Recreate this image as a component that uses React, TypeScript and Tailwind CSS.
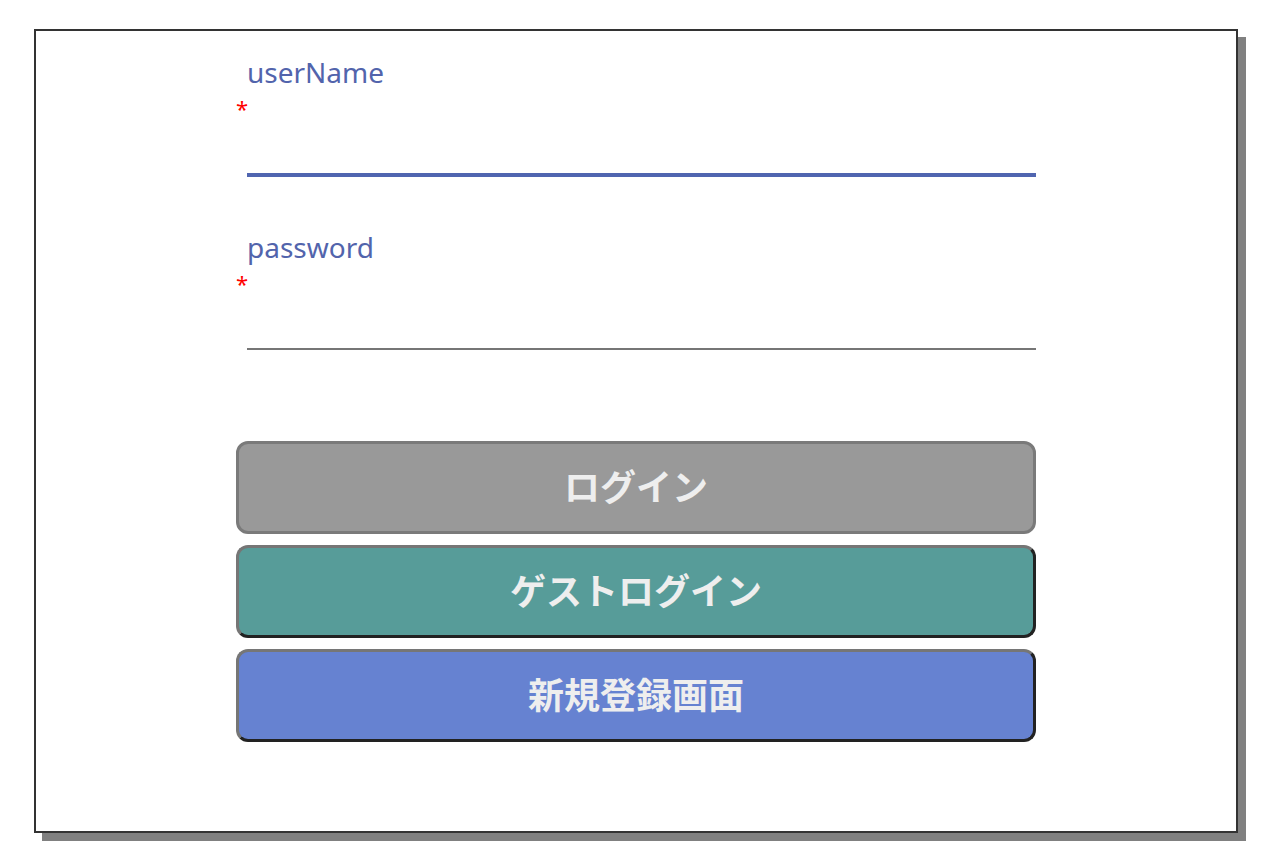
const sans = "font-['Noto_Sans','Noto_Sans_CJK_JP',sans-serif]";

function Field({ label, focused }: { label: string; focused?: boolean }) {
  return (
    <div className="flex flex-col">
      {/* label */}
      <label className="pl-[11px] text-[28px] leading-[34px] text-[#5264ac]">
        {label}
      </label>
      <span className="h-[28px] text-[22px] leading-[38px] text-[#ff0000]">*</span>
      <input
        type={label === "password" ? "password" : "text"}
        className={
          focused
            ? "ml-[11px] h-[60px] border-b-4 border-[#5065b0] bg-transparent outline-none"
            : "ml-[11px] h-[58px] border-b-2 border-[#767676] bg-transparent outline-none"
        }
      />
    </div>
  );
}

export default function App() {
  return (
    <main className={`min-h-screen bg-white pt-[29px] pl-[34px] ${sans}`}>
      <div className="flex h-[804px] w-[1204px] flex-col items-center border-2 border-[#333] shadow-[8px_8px_0_#808080]">
        <div className="flex w-[800px] flex-col">

          {/* ================= FORM ================= */}
          <div className="mt-[24px]">
            <Field label="userName" focused />
          </div>
          <div className="mt-[53px]">
            <Field label="password" />
          </div>

          {/* ================= BUTTONS ================= */}
          <div className="mt-[91px] flex flex-col gap-[11px]">
            <button className="flex h-[93px] items-center justify-center rounded-xl border-[3px] border-[#7a7a7a] bg-[#999999] text-[36px] font-bold text-[#eeeeee]">
              ログイン
            </button>
            <button className="flex h-[93px] items-center justify-center rounded-xl border-[3px] border-t-[#767676] border-l-[#767676] border-r-[#222] border-b-[#222] bg-[#579c99] text-[36px] font-bold text-[#eeeeee]">
              ゲストログイン
            </button>
            <button className="flex h-[93px] items-center justify-center rounded-xl border-[3px] border-t-[#767676] border-l-[#767676] border-r-[#222] border-b-[#222] bg-[#6682d1] text-[36px] font-bold text-[#eeeeee]">
              新規登録画面
            </button>
          </div>

        </div>
      </div>
    </main>
  );
}
